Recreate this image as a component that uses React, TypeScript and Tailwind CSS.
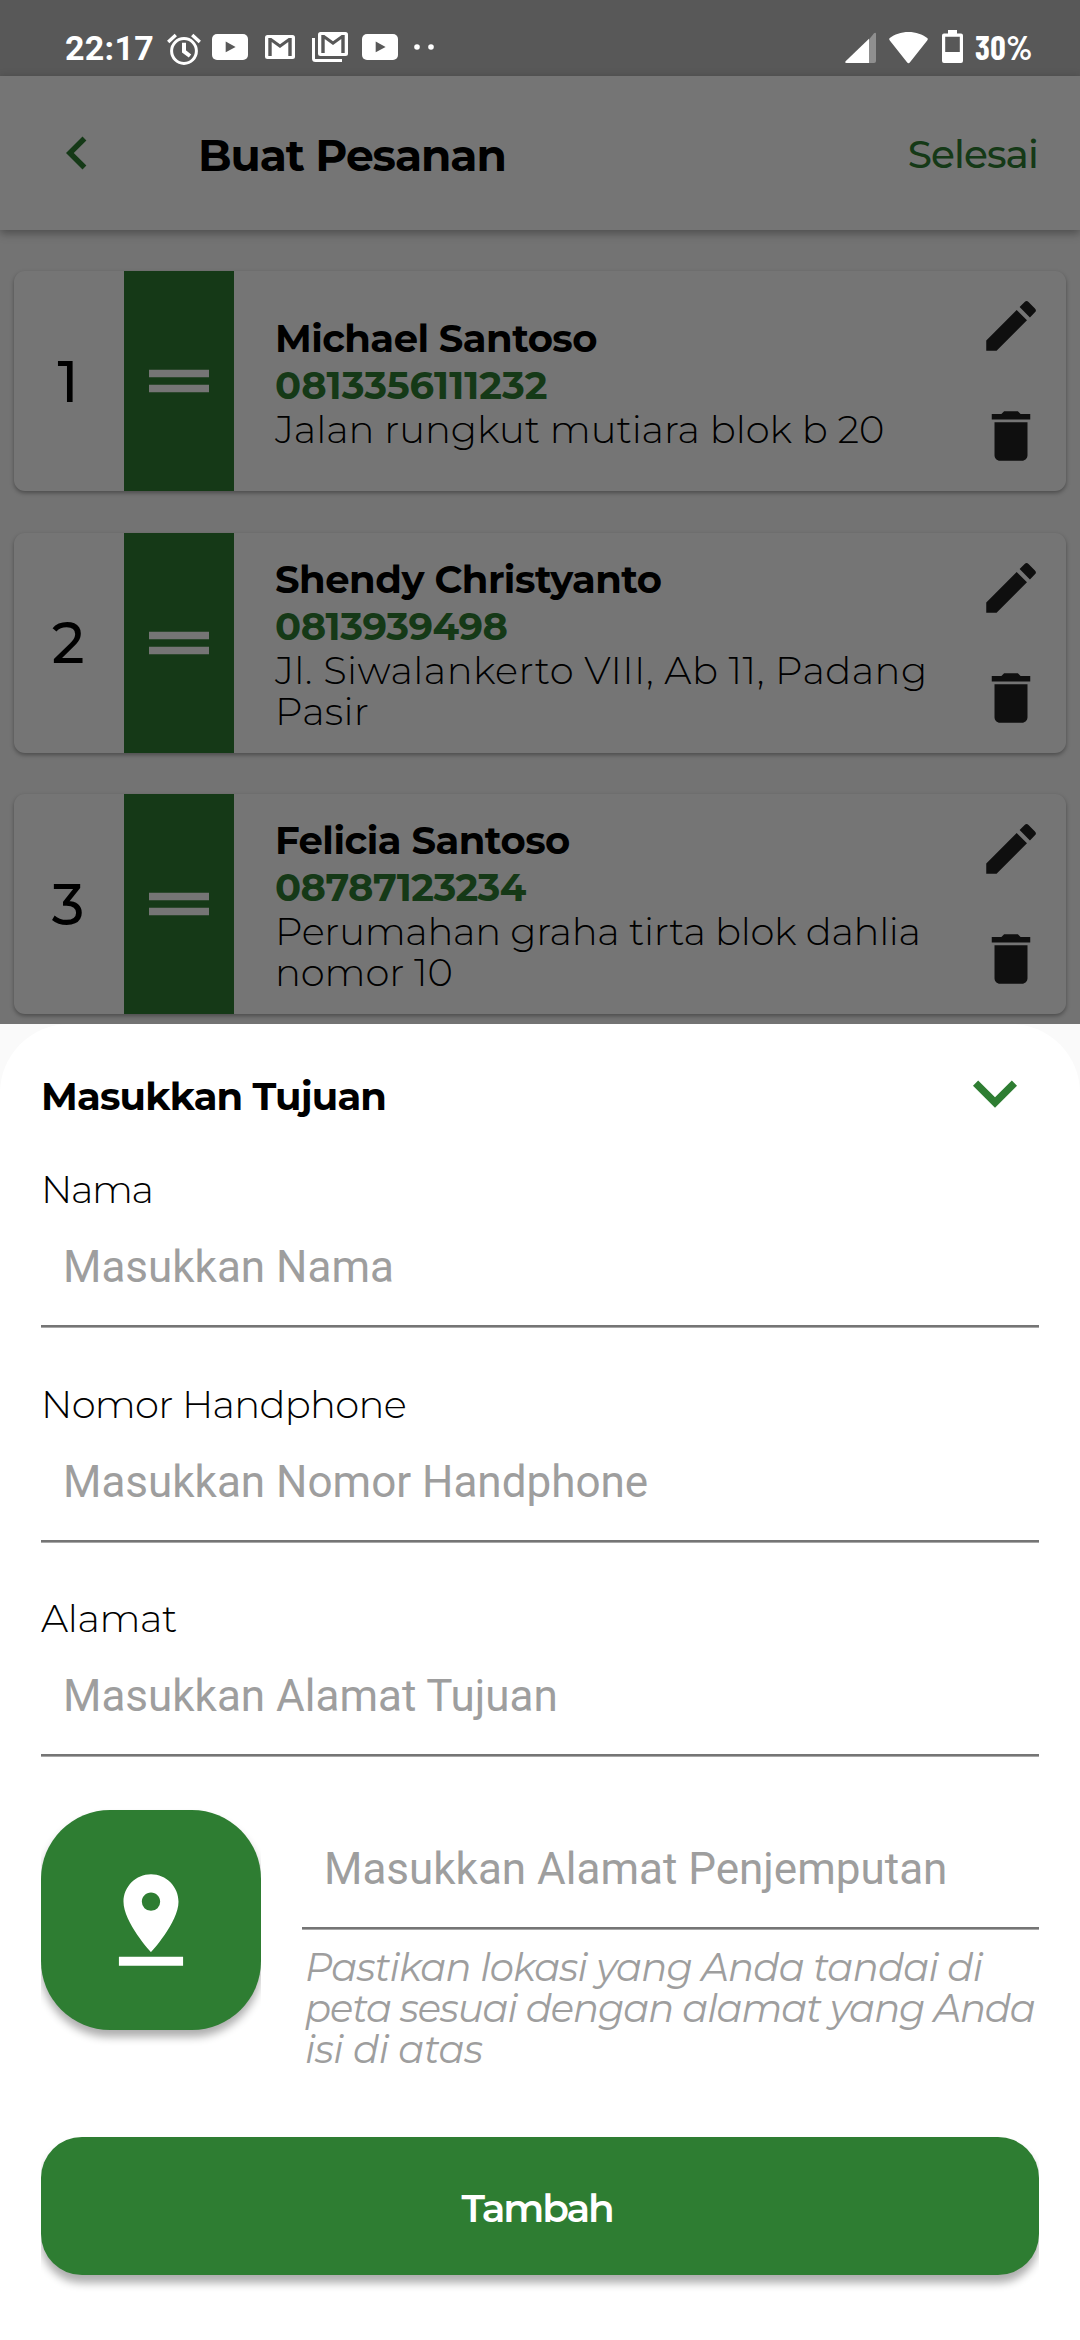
import type { ReactNode } from 'react';
import {
  MdDelete,
  MdDragHandle,
  MdEdit,
  MdKeyboardArrowDown,
  MdKeyboardArrowLeft,
  MdPinDrop,
} from 'react-icons/md';

interface Recipient {
  name: string;
  nameTracking: string;
  phone: string;
  phoneTracking: string;
  address: { text: string; tracking: string }[];
}

const recipients: Recipient[] = [
  {
    name: 'Michael Santoso',
    nameTracking: 'tracking-[-0.55px]',
    phone: '0813356111232',
    phoneTracking: 'tracking-[0px]',
    address: [{ text: 'Jalan rungkut mutiara blok b 20', tracking: 'tracking-[-0.07px]' }],
  },
  {
    name: 'Shendy Christyanto',
    nameTracking: 'tracking-[-0.5px]',
    phone: '0813939498',
    phoneTracking: 'tracking-[-0.48px]',
    address: [
      { text: 'Jl. Siwalankerto VIII, Ab 11, Padang', tracking: 'tracking-[0.42px]' },
      { text: 'Pasir', tracking: 'tracking-[0.2px]' },
    ],
  },
  {
    name: 'Felicia Santoso',
    nameTracking: 'tracking-[-0.5px]',
    phone: '08787123234',
    phoneTracking: 'tracking-[-0.55px]',
    address: [
      { text: 'Perumahan graha tirta blok dahlia', tracking: 'tracking-[-0.32px]' },
      { text: 'nomor 10', tracking: 'tracking-[-0.1px]' },
    ],
  },
];

const fields = [
  { label: 'Nama', placeholder: 'Masukkan Nama', tracking: 'tracking-[-1.4px]' },
  { label: 'Nomor Handphone', placeholder: 'Masukkan Nomor Handphone', tracking: 'tracking-[-0.7px]' },
  { label: 'Alamat', placeholder: 'Masukkan Alamat Tujuan', tracking: 'tracking-[-0.4px]' },
];

function YoutubeIcon({ className }: { className: string }) {
  return (
    <svg viewBox="0 0 36 26" className={`h-[26px] w-[36px] ${className}`}>
      <rect width="36" height="26" rx="5" fill="#fff" />
      <path d="M13.7 7.6v10.6L23.6 13z" fill="#585858" />
    </svg>
  );
}

function StatusBar() {
  return (
    <div className="flex h-[76px] shrink-0 items-start bg-[#585858] text-[34px] leading-[40px] text-white">
      <span className="mt-[28px] ml-[65px] w-[102px] font-['Roboto',sans-serif] font-bold tracking-[0.3px]">22:17</span>
      <svg viewBox="0 0 34 32" className="mt-[33px] h-[32px] w-[34px]" fill="none" stroke="#fff">
        <circle cx="17" cy="18" r="12.4" strokeWidth="3" />
        <path d="M1.2 9 8.8 2M32.8 9 25.2 2" strokeWidth="3.4" />
        <path d="M17 9.8v8.6l6 4.6" strokeWidth="4" />
      </svg>
      <YoutubeIcon className="mt-[34px] ml-[11px]" />
      <svg viewBox="0 0 30 24" className="mt-[35px] ml-[17px] h-[24px] w-[30px]">
        <rect width="30" height="24" rx="2.5" fill="#fff" />
        <path d="M3.3 21V3h3L15 9.2 23.7 3h3v18h-3.4V7L15 13 6.7 7v14z" fill="#585858" />
      </svg>
      <svg viewBox="0 0 36 30" className="mt-[32px] ml-[17px] h-[30px] w-[36px]">
        <rect x="6" width="30" height="24" rx="2.5" fill="#fff" />
        <path d="M9.3 21V3h3L21 9.2 29.7 3h3v18h-3.4V7L21 13 12.7 7v14z" fill="#585858" />
        <path d="M1.5 6v20.500q0 2 2 2H30" fill="none" stroke="#fff" strokeWidth="3" />
      </svg>
      <YoutubeIcon className="mt-[34px] ml-[14px]" />
      <svg viewBox="0 0 20 6" className="mt-[44px] ml-[16px] h-[6px] w-[20px]" fill="#fff">
        <circle cx="3" cy="3" r="2.8" />
        <circle cx="17" cy="3" r="2.8" />
      </svg>

      <svg viewBox="0 0 31 32" className="mt-[32px] ml-auto h-[32px] w-[31px]">
        <path d="M24 7.5 29 1.2Q31 0 31 2v27q0 2-2 2h-5z" fill="#8f8f8f" />
        <path d="M24 6.8V31H1.5Q-.5 31 .6 29.3z" fill="#fff" />
      </svg>
      <svg viewBox="0 0 39 32" className="mt-[32px] ml-[13px] h-[32px] w-[39px]" fill="#fff">
        <path d="M19.5 0C12 0 5.5 2.4.8 6q-1.2 1 0 2.400l17.200 21.900q1.500 1.700 3 0L38.200 8.400q1.200-1.400 0-2.400C33.500 2.400 27 0 19.500 0z" />
      </svg>
      <svg viewBox="0 0 21 33" className="mt-[30px] ml-[14px] h-[33px] w-[21px]" fill="#fff">
        <path
          fillRule="evenodd"
          d="M6 0h9v3.500h4q2 0 2 2V31q0 2-2 2H2q-2 0-2-2V5.500q0-2 2-2h4zM3.200 6.800V22h14.600V6.800z"
        />
      </svg>
      <span className="mt-[27px] mr-[35px] ml-[12px] w-[70px] font-['Barlow_Condensed','Roboto_Condensed',sans-serif] font-bold tracking-[0.5px]">
        30%
      </span>
    </div>
  );
}

function AppBar() {
  return (
    <header className="z-10 flex h-[154px] shrink-0 items-center bg-white pr-[42px] pl-[44px] shadow-[0_3px_9px_rgba(0,0,0,0.35)]">
      <MdKeyboardArrowLeft className="size-[66px] text-[#2e7d32]" />
      <h1 className="mt-[4px] ml-[88px] text-[44px] font-bold tracking-[-1.07px]">Buat Pesanan</h1>
      <button className="mt-[3px] ml-auto text-[39px] font-medium tracking-[-0.9px] text-[#2e7d32]">Selesai</button>
    </header>
  );
}

function RecipientCard({ index, recipient }: { index: number; recipient: Recipient }) {
  return (
    <li className="flex h-[220px] rounded-[11px] bg-white shadow-[0_2px_4px_rgba(0,0,0,0.35)]">
      <div className="flex w-[110px] items-center justify-center pt-[1px] pr-[2px] text-[57px] font-medium">{index}</div>
      <div className="flex w-[109.5px] items-center justify-center bg-[#2e7d32]">
        <MdDragHandle className="size-[90px] shrink-0 text-white" />
      </div>
      <div className="flex flex-1 flex-col justify-center pt-[2px] pl-[41.5px] text-[38.5px] leading-[47px] whitespace-nowrap">
        <p className={`font-bold ${recipient.nameTracking}`}>{recipient.name}</p>
        <p className={`font-bold text-[#2e7d32] ${recipient.phoneTracking}`}>{recipient.phone}</p>
        {recipient.address.map((line) => (
          <p key={line.text} className={`leading-[41px] font-[350] ${line.tracking}`}>
            {line.text}
          </p>
        ))}
      </div>
      <div className="flex w-[110px] flex-col text-black/87">
        <button className="flex flex-1 items-center justify-center">
          <MdEdit className="size-[66px]" />
        </button>
        <button className="flex flex-1 items-center justify-center">
          <MdDelete className="size-[66px]" />
        </button>
      </div>
    </li>
  );
}

function LineInput({ placeholder, className }: { placeholder: string; className: string }) {
  return (
    <input
      placeholder={placeholder}
      className={`block w-full border-b-2 border-[#757575] pl-[22px] font-['Roboto',sans-serif] text-[44px] leading-[52px] shadow-[0_1px_0_#a8a8a8] outline-none placeholder:text-[#9e9e9e] ${className}`}
    />
  );
}

// Keeps the elevation shadow inside the button's own width
function Elevated({ children, className }: { children: ReactNode; className: string }) {
  return <div className={`overflow-x-clip ${className}`}>{children}</div>;
}

function DestinationSheet() {
  return (
    <section className="flex-1 bg-[#fafafa]">
      <div className="h-full rounded-t-[69px] bg-white px-[41px] pt-[25px]">
        <div className="flex h-[88px] items-center justify-between">
          <h2 className="mt-[9px] text-[38.5px] font-bold tracking-[-0.8px]">Masukkan Tujuan</h2>
          <MdKeyboardArrowDown className="size-[88px] text-[#2e7d32]" />
        </div>

        <form className="mt-[29.5px]">
          <div className="flex flex-col gap-[52.6px]">
            {fields.map((field) => (
              <div key={field.label} className="h-[162px]">
                <label className={`block text-[38.5px] leading-[47px] font-[350] ${field.tracking}`}>{field.label}</label>
                <LineInput placeholder={field.placeholder} className="h-[114px] pt-[28px] pb-[32px]" />
              </div>
            ))}
          </div>

          <div className="mt-[53px] flex gap-[41px]">
            <Elevated className="h-[220px] w-[220px] shrink-0">
              <button
                type="button"
                className="flex size-[220px] items-center justify-center rounded-[69px] bg-[#2e7d32] shadow-[0_7px_9px_rgba(0,0,0,0.32)]"
              >
                <MdPinDrop className="size-[110px] text-white" />
              </button>
            </Elevated>
            <div className="flex-1">
              <LineInput placeholder="Masukkan Alamat Penjemputan" className="h-[119px] pt-[33px] pb-[32px]" />
              <p className="mt-[18px] pl-[3px] text-[38.5px] leading-[41px] whitespace-nowrap text-[#9e9e9e] italic">
                <span className="block tracking-[-0.8px]">Pastikan lokasi yang Anda tandai di</span>
                <span className="block tracking-[-1.08px]">peta sesuai dengan alamat yang Anda</span>
                <span className="block tracking-[-0.4px]">isi di atas</span>
              </p>
            </div>
          </div>

          <Elevated className="mt-[67px] h-[138px]">
            <button
              type="button"
              className="h-[138px] w-full rounded-[41px] bg-[#2e7d32] pt-[5px] pr-[6px] text-[39px] font-semibold tracking-[-2.2px] text-white shadow-[0_8px_9px_rgba(0,0,0,0.32)]"
            >
              Tambah
            </button>
          </Elevated>
        </form>
      </div>
    </section>
  );
}

export default function App() {
  return (
    <div className="flex h-[2340px] w-[1080px] flex-col overflow-hidden bg-[#fafafa] font-['Montserrat','Inter',sans-serif] text-black">
      <StatusBar />
      <main className="relative flex h-[947.5px] shrink-0 flex-col">
        <AppBar />
        <ol className="flex flex-col gap-[41.4px] px-[14px] pt-[41.3px]">
          {recipients.map((recipient, i) => (
            <RecipientCard key={recipient.phone} index={i + 1} recipient={recipient} />
          ))}
        </ol>
        {/* modal scrim */}
        <div className="absolute inset-0 z-20 bg-black/54" />
      </main>
      <DestinationSheet />
    </div>
  );
}
